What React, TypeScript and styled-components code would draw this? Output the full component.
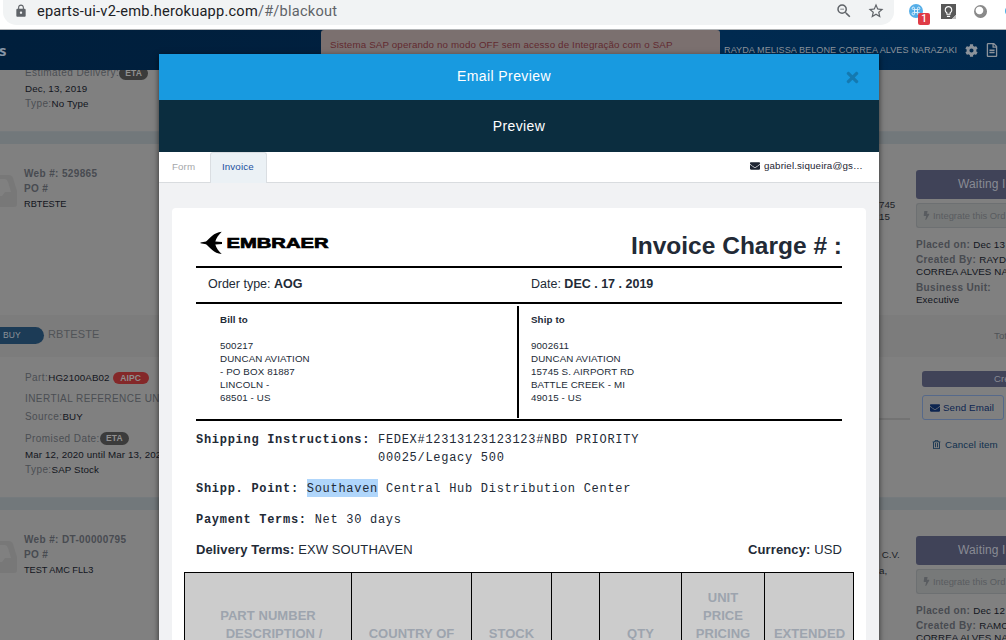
import React from "react";
import styled, { createGlobalStyle } from "styled-components";
import { FaBolt, FaCog, FaEnvelope, FaRegFileAlt, FaRegTrashAlt, FaTimes } from "react-icons/fa";
import { MdLightbulbOutline, MdLock, MdStarBorder, MdZoomOut } from "react-icons/md";

const Global = createGlobalStyle`
  * { box-sizing: border-box; }
  body { margin: 0; background: #808080; overflow: hidden; }
  svg { display: block; flex: none; }
`;

const Frame = styled.div`
  position: relative;
  width: 1006px;
  height: 640px;
  overflow: hidden;
  display: flex;
  flex-direction: column;
  background: #808080;
  font-family: "Liberation Sans", Arial, sans-serif;
  font-size: 9.75px;
  letter-spacing: 0.12px;
  white-space: nowrap;
`;

/* Browser toolbar */
const Toolbar = styled.div`
  height: 30px;
  flex: none;
  display: flex;
  align-items: flex-start;
  padding-left: 3px;
  overflow: hidden;
  background: #fff;
  border-bottom: 1px solid #b4b6b8;
`;
const AddressBar = styled.div`
  width: 891px;
  height: 25px;
  flex: none;
  display: flex;
  align-items: center;
  padding: 0 9px 3px 11px;
  border-radius: 0 0 14px 14px / 0 0 13px 13px;
  background: #f1f3f4;
  color: #5f6368;
`;
const Url = styled.div`
  margin-left: 9px;
  flex: 1;
  font: 14.6px/20px Roboto, sans-serif;
  letter-spacing: 0.22px;
  color: #5f6368;
  b { font-weight: 400; color: #202124; }
`;
const BarIcons = styled.div`
  display: flex;
  align-items: center;
  gap: 14px;
`;
const Extensions = styled.div`
  display: flex;
  flex: none;
  align-items: flex-start;
  padding: 4px 0 0 15px;
  gap: 18px;
`;
const CommandIcon = styled.div`
  position: relative;
  width: 14px;
  height: 14px;
`;
const Count = styled.span`
  position: absolute;
  left: 9px;
  top: 9px;
  width: 12px;
  height: 12px;
  border-radius: 2px;
  background: #df3b46;
  color: #fff;
  font: 500 10px/12px Roboto, sans-serif;
  letter-spacing: 0;
  text-align: center;
`;
const NoteIcon = styled.div`
  width: 15px;
  height: 15px;
  display: flex;
  align-items: center;
  justify-content: center;
  background: linear-gradient(135deg, #585858 84%, #bbb 84%);
  color: #fff;
`;
const RingIcon = styled.div`
  width: 13px;
  height: 13px;
  margin-top: 1px;
  border-radius: 50%;
  background: radial-gradient(circle at 42% 42%, #fff 0 32%, #8a8a8a 40% 62%, #555 100%);
`;
const BlueDot = styled.div`
  width: 12px;
  height: 12px;
  margin-top: 1px;
  border-radius: 50%;
  background: #45b0e6;
`;

/* Application header */
const Header = styled.header`
  height: 40px;
  flex: none;
  display: flex;
  align-items: center;
  overflow: hidden;
  background: linear-gradient(90deg, #001f3c, #00203f 40%, #002a50 72%, #00284c);
  color: #8c939b;
`;
const Brand = styled.div`
  width: 321px;
  flex: none;
  font: bold 15px/20px "Open Sans", sans-serif;
  text-indent: -1px;
  color: #8795a5;
`;
const Alert = styled.div`
  width: 399px;
  flex: none;
  height: 40px;
  padding: 8px 0 0 9px;
  border-radius: 3px;
  background: #7b706f;
  color: #622a30;
  line-height: 14px;
  letter-spacing: 0.15px;
`;
const User = styled.div`
  width: 241px;
  flex: none;
  padding-left: 4px;
  font-size: 9.1px;
  letter-spacing: 0.06px;
`;
const HeaderIcons = styled.div`
  display: flex;
  align-items: center;
  gap: 7px;
  padding-left: 4px;
`;

/* Order list behind the dialog */
const Orders = styled.main`
  flex: 1;
  overflow: hidden;
`;
const Section = styled.section<{ $h: number; $tone?: string }>`
  height: ${(p) => p.$h}px;
  display: flex;
  justify-content: space-between;
  overflow: hidden;
  background: ${(p) => p.$tone || "#808080"};
`;
const Band = styled.div<{ $h: number }>`
  height: ${(p) => p.$h}px;
  background: #72787b;
  border-top: 1px solid #757a7d;
`;
const Info = styled.div<{ $x: number; $top: number }>`
  width: 159px;
  padding-left: ${(p) => p.$x}px;
  margin-top: ${(p) => p.$top}px;
`;
const Line = styled.div<{ $h?: number; $gap?: number; $tight?: boolean }>`
  display: flex;
  align-items: center;
  height: ${(p) => p.$h || 15}px;
  margin-top: ${(p) => p.$gap || 0}px;
  font-size: ${(p) => (p.$tight ? 9.2 : 9.75)}px;
  letter-spacing: ${(p) => (p.$tight ? 0 : 0.12)}px;
  white-space: pre;
  color: #12151d;
`;
const Label = styled.span<{ $bold?: boolean }>`
  font-size: 10px;
  font-weight: ${(p) => (p.$bold ? 700 : 400)};
  letter-spacing: ${(p) => (p.$bold ? 0.36 : 0.42)}px;
  color: ${(p) => (p.$bold ? "#484b51" : "#4b4e53")};
`;
const Badge = styled.span<{ $red?: boolean }>`
  height: ${(p) => (p.$red ? 12 : 13)}px;
  width: ${(p) => (p.$red ? 36 : 29)}px;
  margin: 1px 0 0 ${(p) => (p.$red ? 3 : 0)}px;
  border-radius: 7px;
  background: ${(p) => (p.$red ? "#842829" : "#3b3b3b")};
  color: #8f8f8f;
  font: bold 8.5px/13px "Liberation Sans", Arial, sans-serif;
  letter-spacing: 0.1px;
  text-align: center;
`;
const Tray = styled.div`
  display: flex;
  width: 17px;
  margin: 31px 7px 0 0;
  color: #787878;
`;
const OrderLeft = styled.div`
  display: flex;
`;
const OrderRight = styled.div`
  display: flex;
  width: 127px;
`;
const Clipped = styled.div<{ $top: number; $h: number }>`
  width: 37px;
  padding-top: ${(p) => p.$top}px;
  line-height: ${(p) => p.$h}px;
  letter-spacing: 0;
  white-space: pre;
  color: #1c1f27;
`;
const OrderActions = styled.div`
  width: 90px;
  padding-top: 26px;
`;
const StatusButton = styled.div<{ $small?: boolean }>`
  height: ${(p) => (p.$small ? 16 : 29)}px;
  padding-left: ${(p) => (p.$small ? 72 : 42)}px;
  border-radius: 3px 0 0 3px;
  background: #404358;
  color: #898b94;
  font-size: ${(p) => (p.$small ? 9.5 : 12)}px;
  line-height: ${(p) => (p.$small ? 16 : 28)}px;
  letter-spacing: 0.15px;
`;
const IntegrateButton = styled.div`
  height: 25px;
  margin: 4px 0 9px;
  display: flex;
  align-items: center;
  gap: 2px;
  padding-left: 5px;
  border: 1px solid #6d7072;
  border-right: 0;
  border-radius: 3px 0 0 3px;
  background: #777979;
  color: #595c60;
  font-size: 9.4px;
  letter-spacing: 0;
`;
const GroupPill = styled.div`
  width: 44px;
  height: 17px;
  margin: 12px 4px 0 0;
  padding-left: 3px;
  border-radius: 0 9px 9px 0;
  background: #1c3b56;
  color: #8c9298;
  font-size: 8.5px;
  line-height: 17px;
  letter-spacing: 0.05px;
`;
const GroupName = styled.div`
  padding-top: 12px;
  color: #505357;
  font-size: 11px;
  line-height: 15px;
  letter-spacing: 0.1px;
`;
const GroupTotal = styled.div`
  width: 12px;
  padding-top: 14px;
  color: #505357;
  font-size: 9.75px;
  line-height: 14px;
  letter-spacing: 0;
`;
const GroupLeft = styled.div`
  display: flex;
`;
const ItemRule = styled.div`
  width: 31px;
  height: 2px;
  margin: 61px 12px 0 0;
  background: #737373;
`;
const ItemActions = styled.div`
  width: 84px;
  padding-top: 14px;
`;
const EmailButton = styled.div`
  width: 82px;
  height: 25px;
  margin-top: 8px;
  display: flex;
  align-items: center;
  gap: 3px;
  padding-left: 7px;
  border: 1px solid #56698a;
  border-radius: 3px;
  color: #0c2550;
`;
const CancelLink = styled.div`
  display: flex;
  align-items: center;
  gap: 4px;
  height: 14px;
  margin-top: 17px;
  padding-left: 10px;
  color: #10304e;
`;

/* Dialog */
const Dialog = styled.div`
  position: absolute;
  left: 159px;
  top: 54px;
  width: 720px;
  height: 600px;
  background: #f1f2f4;
  box-shadow: 0 2px 6px rgba(0, 0, 0, 0.65);
`;
const DialogTitle = styled.div`
  height: 46px;
  display: flex;
  align-items: center;
  padding-right: 18px;
  background: #189ae0;
  color: #fff;
  font-size: 14px;
  letter-spacing: 0.4px;
  span { flex: 1; padding: 0 0 2px 5px; text-align: center; }
  svg { color: #1479b0; }
`;
const DialogSubtitle = styled.div`
  height: 52px;
  background: #0b2d3f;
  color: #fff;
  font-size: 14px;
  line-height: 52px;
  letter-spacing: 0.4px;
  text-align: center;
`;
const Tabs = styled.div`
  height: 31px;
  display: flex;
  background: #fff;
  border-bottom: 1px solid #d9dcdf;
`;
const Tab = styled.div<{ $active?: boolean }>`
  width: ${(p) => (p.$active ? 57 : 51)}px;
  height: ${(p) => (p.$active ? 31 : 30)}px;
  padding-left: ${(p) => (p.$active ? 11 : 13)}px;
  line-height: ${(p) => (p.$active ? 27 : 29)}px;
  color: ${(p) => (p.$active ? "#2150a0" : "#a5a7aa")};
  background: ${(p) => (p.$active ? "#ebf1f5" : "#fff")};
  border: ${(p) => (p.$active ? "1px solid #dadee2" : "0")};
  border-bottom: 0;
  border-radius: 3px 3px 0 0;
`;
const Recipient = styled.div`
  flex: 1;
  display: flex;
  align-items: center;
  justify-content: flex-end;
  gap: 4px;
  padding: 0 16px 3px 0;
  letter-spacing: 0.15px;
  color: #1d2431;
`;
const Paper = styled.div`
  height: 450px;
  margin: 25px 13px 0;
  padding: 0 24px;
  border-radius: 4px 4px 0 0;
  background: #fff;
  color: #222a36;
`;
const PaperHead = styled.div`
  height: 60px;
  display: flex;
  justify-content: space-between;
  padding-top: 22px;
  border-bottom: 2px solid #000;
  h1 {
    margin: 0;
    font-size: 24.5px;
    line-height: 31px;
    letter-spacing: 0;
  }
`;
const Meta = styled.div`
  height: 36px;
  display: grid;
  grid-template-columns: 323px 1fr;
  border-bottom: 2px solid #000;
  font-size: 12.5px;
  line-height: 32px;
  letter-spacing: 0;
  span { padding-left: 12px; }
`;
const Addresses = styled.div`
  height: 117px;
  display: grid;
  grid-template-columns: 323px 1fr;
  padding: 2px 0 1px;
  border-bottom: 2px solid #000;
`;
const Address = styled.div<{ $left?: boolean }>`
  padding: 7px 0 0 ${(p) => (p.$left ? 24 : 12)}px;
  border-right: ${(p) => (p.$left ? "2px solid #000" : "0")};
  line-height: 13px;
  b { display: block; margin-bottom: 13px; }
`;
const Terms = styled.div`
  display: flex;
  flex-direction: column;
  gap: 13px;
  padding: 10px 0 12px;
`;
const Term = styled.div<{ $sans?: boolean }>`
  display: flex;
  white-space: pre;
  line-height: 18px;
  font-family: ${(p) => (p.$sans ? '"Liberation Sans", Arial, sans-serif' : '"Courier New", "Liberation Mono", monospace')};
  font-size: ${(p) => (p.$sans ? 13 : 12)}px;
  letter-spacing: ${(p) => (p.$sans ? 0.12 : 0.71)}px;
`;
const Selected = styled.span`
  height: 18px;
  margin-top: -1px;
  padding-top: 1px;
  background: #b0d6fb;
`;
const Spread = styled.div`
  display: flex;
  justify-content: space-between;
  margin: -1px 0 1px;
`;
const Table = styled.div`
  height: 90px;
  display: grid;
  grid-template-columns: 167px 120px 80px 48px 82px 83px 90px;
  margin: 0 -12px;
  border-top: 1px solid #000;
  border-right: 1px solid #000;
  background: #ccc;
`;
const Cell = styled.div<{ $skip?: number }>`
  padding-top: ${(p) => 16 + (p.$skip || 0) * 18}px;
  border-left: 1px solid #000;
  color: #9da4ae;
  font-size: 13px;
  font-weight: 700;
  line-height: 18px;
  letter-spacing: 0.05px;
  text-align: center;
`;
const Indented = styled.div`
  text-indent: 12px;
`;

const TrayIcon = () => (
  <svg width="17" height="32" viewBox="0 0 17 32">
    <path
      fill="currentColor"
      fillRule="evenodd"
      d="M0 0h8q4 0 5 3l4 13v13q0 3-3 3H0V21h2l3-4h6L8 7Q7 4 5 4H0z"
    />
  </svg>
);

const EmbraerLogo = () => (
  <svg width="136" height="26" viewBox="0 0 136 26">
    <path
      d="M4.500 12.500L10 11.500C14 8.500 17.500 2.500 25.700 1.800C22.500 5 20.300 8 19.300 11.500L26 12.100V13.900L19.300 14.500C20.300 18 22.500 21 25.700 24C17.500 23.500 14 17.500 10 14.300L4.500 13.300z"
      fill="#000"
    />
    <text
      x="30.500"
      y="18"
      fontFamily="Liberation Sans, Arial, sans-serif"
      fontWeight="700"
      fontSize="14.500"
      letterSpacing="0"
      textLength="102"
      lengthAdjust="spacingAndGlyphs"
      fill="#000"
      stroke="#000"
      strokeWidth="0.700"
    >
      EMBRAER
    </text>
  </svg>
);

type OrderProps = {
  height: number;
  web: string;
  po: string;
  clipped: string[];
  clipTop: number;
  clipLine: number;
  placed: string;
  by: string;
};

const Order = ({ height, web, po, clipped, clipTop, clipLine, placed, by }: OrderProps) => (
  <Section $h={height}>
    <OrderLeft>
      <Tray><TrayIcon /></Tray>
      <Info $x={0} $top={22}>
        <Line><Label $bold>{web}</Label></Line>
        <Line><Label $bold>PO #</Label></Line>
        <Line $tight>{po}</Line>
      </Info>
    </OrderLeft>
    <OrderRight>
      <Clipped $top={clipTop} $h={clipLine}>
        {clipped.map((c) => <div key={c}>{c}</div>)}
      </Clipped>
      <OrderActions>
        <StatusButton>Waiting I</StatusButton>
        <IntegrateButton><FaBolt size={9} />Integrate this Ord</IntegrateButton>
        <Line $h={14}><Label $bold>Placed on: </Label>{placed}</Line>
        <Line $h={12} $gap={2}><Label $bold>Created By: </Label>{by}</Line>
        <Line $h={13}>CORREA ALVES NA</Line>
        <Line $h={14} $gap={2}><Label $bold>Business Unit:</Label></Line>
        <Line $h={11}>Executive</Line>
      </OrderActions>
    </OrderRight>
  </Section>
);

export default function App() {
  return (
    <Frame>
      <Global />
      <Toolbar>
        <AddressBar>
          <MdLock size={14} />
          <Url><b>eparts-ui-v2-emb.herokuapp.com</b>/#/blackout</Url>
          <BarIcons><MdZoomOut size={18} /><MdStarBorder size={18} /></BarIcons>
        </AddressBar>
        <Extensions>
          <CommandIcon>
            <svg width="14" height="14" viewBox="0 0 14 14">
              <circle cx="7" cy="7" r="7" fill="#55aee8" />
              <path
                d="M5.500 5.500h3v3h-3zM5.500 5.500H4.300a1.200 1.200 0 1 1 1.200-1.200zM8.500 5.500V4.300a1.200 1.200 0 1 1 1.200 1.200zM8.500 8.500h1.200a1.200 1.200 0 1 1-1.200 1.200zM5.500 8.500v1.200a1.200 1.200 0 1 1-1.200-1.200z"
                fill="none"
                stroke="#e9f5fd"
                strokeWidth="0.900"
              />
            </svg>
            <Count>1</Count>
          </CommandIcon>
          <NoteIcon><MdLightbulbOutline size={13} /></NoteIcon>
          <RingIcon />
          <BlueDot />
        </Extensions>
      </Toolbar>

      <Header>
        <Brand>s</Brand>
        <Alert>Sistema SAP operando no modo OFF sem acesso de Integração com o SAP</Alert>
        <User>RAYDA MELISSA BELONE CORREA ALVES NARAZAKI</User>
        <HeaderIcons>
          <FaCog size={13} />
          <FaRegFileAlt size={14} />
          <svg width="12" height="12" viewBox="0 0 12 12">
            <circle cx="6" cy="6" r="5" fill="none" stroke="currentColor" strokeWidth="1.500" />
          </svg>
        </HeaderIcons>
      </Header>

      <Orders>
        <Section $h={61}>
          <Info $x={25} $top={-5}>
            <Line $h={15}><Label>Estimated Delivery:</Label><Badge>ETA</Badge></Line>
            <Line $gap={1}>Dec, 13, 2019</Line>
            <Line><Label>Type:</Label>No Type</Line>
          </Info>
        </Section>
        <Band $h={13} />
        <Order
          height={171}
          web="Web #: 529865"
          po="RBTESTE"
          clipped={["745", "15"]}
          clipTop={55}
          clipLine={12}
          placed="Dec 13"
          by="RAYD"
        />
        <Section $h={42} $tone="#7c7c7c">
          <GroupLeft>
            <GroupPill>BUY</GroupPill>
            <GroupName>RBTESTE</GroupName>
          </GroupLeft>
          <GroupTotal>Tot</GroupTotal>
        </Section>
        <Section $h={140}>
          <Info $x={25} $top={12}>
            <Line $h={16}><Label>Part:</Label>HG2100AB02<Badge $red>AIPC</Badge></Line>
            <Line $h={16} $gap={5}><Label>INERTIAL REFERENCE UN</Label></Line>
            <Line $h={16} $gap={2}><Label>Source:</Label>BUY</Line>
            <Line $h={16} $gap={6}><Label>Promised Date:</Label><Badge>ETA</Badge></Line>
            <Line $h={15} $gap={1}>Mar 12, 2020 until Mar 13, 202</Line>
            <Line><Label>Type:</Label>SAP Stock</Line>
          </Info>
          <OrderRight>
            <ItemRule />
            <ItemActions>
              <StatusButton $small>Cre</StatusButton>
              <EmailButton><FaEnvelope size={10} />Send Email</EmailButton>
              <CancelLink><FaRegTrashAlt size={9} />Cancel item</CancelLink>
            </ItemActions>
          </OrderRight>
        </Section>
        <Band $h={13} />
        <Order
          height={171}
          web="Web #: DT-00000795"
          po="TEST AMC FLL3"
          clipped={[" C.V.", "a,"]}
          clipTop={37}
          clipLine={16}
          placed="Dec 12"
          by="RAMO"
        />
      </Orders>

      <Dialog>
        <DialogTitle><span>Email Preview</span><FaTimes size={17} /></DialogTitle>
        <DialogSubtitle>Preview</DialogSubtitle>
        <Tabs>
          <Tab>Form</Tab>
          <Tab $active>Invoice</Tab>
          <Recipient><FaEnvelope size={10} />gabriel.siqueira@gs…</Recipient>
        </Tabs>
        <Paper>
          <PaperHead>
            <EmbraerLogo />
            <h1>Invoice Charge # :</h1>
          </PaperHead>
          <Meta>
            <span>Order type: <b>AOG</b></span>
            <span>Date: <b>DEC . 17 . 2019</b></span>
          </Meta>
          <Addresses>
            <Address $left>
              <b>Bill to</b>
              500217<br />DUNCAN AVIATION<br />- PO BOX 81887<br />LINCOLN -<br />68501 - US
            </Address>
            <Address>
              <b>Ship to</b>
              9002611<br />DUNCAN AVIATION<br />15745 S. AIRPORT RD<br />BATTLE CREEK - MI<br />49015 - US
            </Address>
          </Addresses>
          <Terms>
            <Term>
              <b>Shipping Instructions: </b>
              <div>FEDEX#12313123123123#NBD PRIORITY<br />00025/Legacy 500</div>
            </Term>
            <Term><b>Shipp. Point: </b><Selected>Southaven</Selected> Central Hub Distribution Center</Term>
            <Term><b>Payment Terms: </b>Net 30 days</Term>
            <Spread>
              <Term $sans><b>Delivery Terms: </b>EXW SOUTHAVEN</Term>
              <Term $sans><b>Currency: </b>USD</Term>
            </Spread>
          </Terms>
          <Table>
            <Cell $skip={1}>PART NUMBER<Indented>DESCRIPTION /</Indented></Cell>
            <Cell $skip={2}>COUNTRY OF</Cell>
            <Cell $skip={2}>STOCK</Cell>
            <Cell />
            <Cell $skip={2}>QTY</Cell>
            <Cell>UNIT<br />PRICE<br />PRICING</Cell>
            <Cell $skip={2}>EXTENDED</Cell>
          </Table>
        </Paper>
      </Dialog>
    </Frame>
  );
}
